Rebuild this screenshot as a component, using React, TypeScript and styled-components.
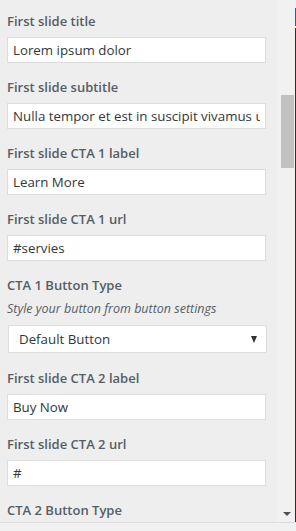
import React from "react";
import styled, { createGlobalStyle } from "styled-components";

const GlobalStyle = createGlobalStyle`
  html, body {
    margin: 0;
    padding: 0;
    background: #eeeeee;
  }
  body {
    font-family: "Open Sans", "Noto Sans", sans-serif;
  }
`;

const Frame = styled.div`
  width: 296px;
  height: 531px;
  display: flex;
  flex-direction: column;
  overflow: hidden;
`;

const Main = styled.div`
  display: flex;
  height: 522px;
`;

const Panel = styled.div`
  width: 277px;
  background: #eeeeee;
  padding: 12px 0 0 7px;
  box-sizing: border-box;
  overflow: hidden;
`;

const Track = styled.div`
  width: 18px;
  background: #f1f1f1;
  display: flex;
  flex-direction: column;
  align-items: center;
  padding-top: 95px;
  box-sizing: border-box;
`;

const Thumb = styled.div`
  width: 13px;
  height: 73px;
  margin-left: 2px;
  background: #c1c1c1;
`;

const DownArrow = styled.div`
  margin-top: auto;
  margin-bottom: 6px;
  margin-left: 2px;
  width: 0;
  height: 0;
  border-left: 4px solid transparent;
  border-right: 4px solid transparent;
  border-top: 4px solid #505050;
`;

const Edge = styled.div`
  width: 1px;
  background: linear-gradient(
    to bottom,
    #eeeeee 0 8px,
    #0073aa 8px 26px,
    #eeeeee 26px 28px,
    #3c2b22 28px
  );
`;

const Footer = styled.div`
  flex: 1;
  border-top: 1px solid #dddddd;
  background: #f1f1f1;
`;

const Field = styled.div<{ $gap?: number }>`
  margin-bottom: ${(p) => p.$gap ?? 15}px;
`;

const Label = styled.div`
  font-size: 13px;
  line-height: 18px;
  font-weight: 600;
  color: #555d66;
  margin-bottom: 7px;
  white-space: nowrap;
`;

const Description = styled.div`
  font-size: 12.5px;
  line-height: 16px;
  font-style: italic;
  color: #555d66;
  margin: 0 0 8px;
  white-space: nowrap;
`;

const TextInput = styled.input`
  display: block;
  width: 259px;
  height: 26px;
  box-sizing: border-box;
  padding: 0 5px;
  margin: 0;
  border: 1px solid #dddddd;
  border-radius: 0;
  background: #ffffff;
  font-family: "Open Sans", "Noto Sans", sans-serif;
  font-size: 13.3px;
  color: #32373c;
  outline: none;
`;

const SelectBox = styled.div`
  display: flex;
  align-items: center;
  justify-content: space-between;
  width: 259px;
  height: 28px;
  margin-left: 1px;
  box-sizing: border-box;
  padding: 0 9px 0 10px;
  border: 1px solid #dddddd;
  background: #ffffff;
  font-size: 13.3px;
  color: #32373c;
`;

const Caret = styled.span`
  width: 0;
  height: 0;
  border-left: 3.5px solid transparent;
  border-right: 3.5px solid transparent;
  border-top: 7px solid #333333;
`;

const fields: { label: string; value: string }[] = [
  { label: "First slide title", value: "Lorem ipsum dolor" },
  { label: "First slide subtitle", value: "Nulla tempor et est in suscipit vivamus ut" },
  { label: "First slide CTA 1 label", value: "Learn More" },
  { label: "First slide CTA 1 url", value: "#servies" },
];

const fields2: { label: string; value: string }[] = [
  { label: "First slide CTA 2 label", value: "Buy Now" },
  { label: "First slide CTA 2 url", value: "#" },
];

function TextField({ label, value }: { label: string; value: string }) {
  return (
    <Field>
      <Label>{label}</Label>
      <TextInput type="text" defaultValue={value} readOnly />
    </Field>
  );
}

export default function App() {
  return (
    <>
      <GlobalStyle />
      <Frame>
        <Main>
          <Panel>
            {fields.map((f) => (
              <TextField key={f.label} {...f} />
            ))}
            <Field $gap={16}>
              <Label>CTA 1 Button Type</Label>
              <Description>Style your button from button settings</Description>
              <SelectBox>
                <span>Default Button</span>
                <Caret />
              </SelectBox>
            </Field>
            {fields2.map((f) => (
              <TextField key={f.label} {...f} />
            ))}
            <Field>
              <Label>CTA 2 Button Type</Label>
            </Field>
          </Panel>
          <Track>
            <Thumb />
            <DownArrow />
          </Track>
          <Edge />
        </Main>
        <Footer />
      </Frame>
    </>
  );
}
